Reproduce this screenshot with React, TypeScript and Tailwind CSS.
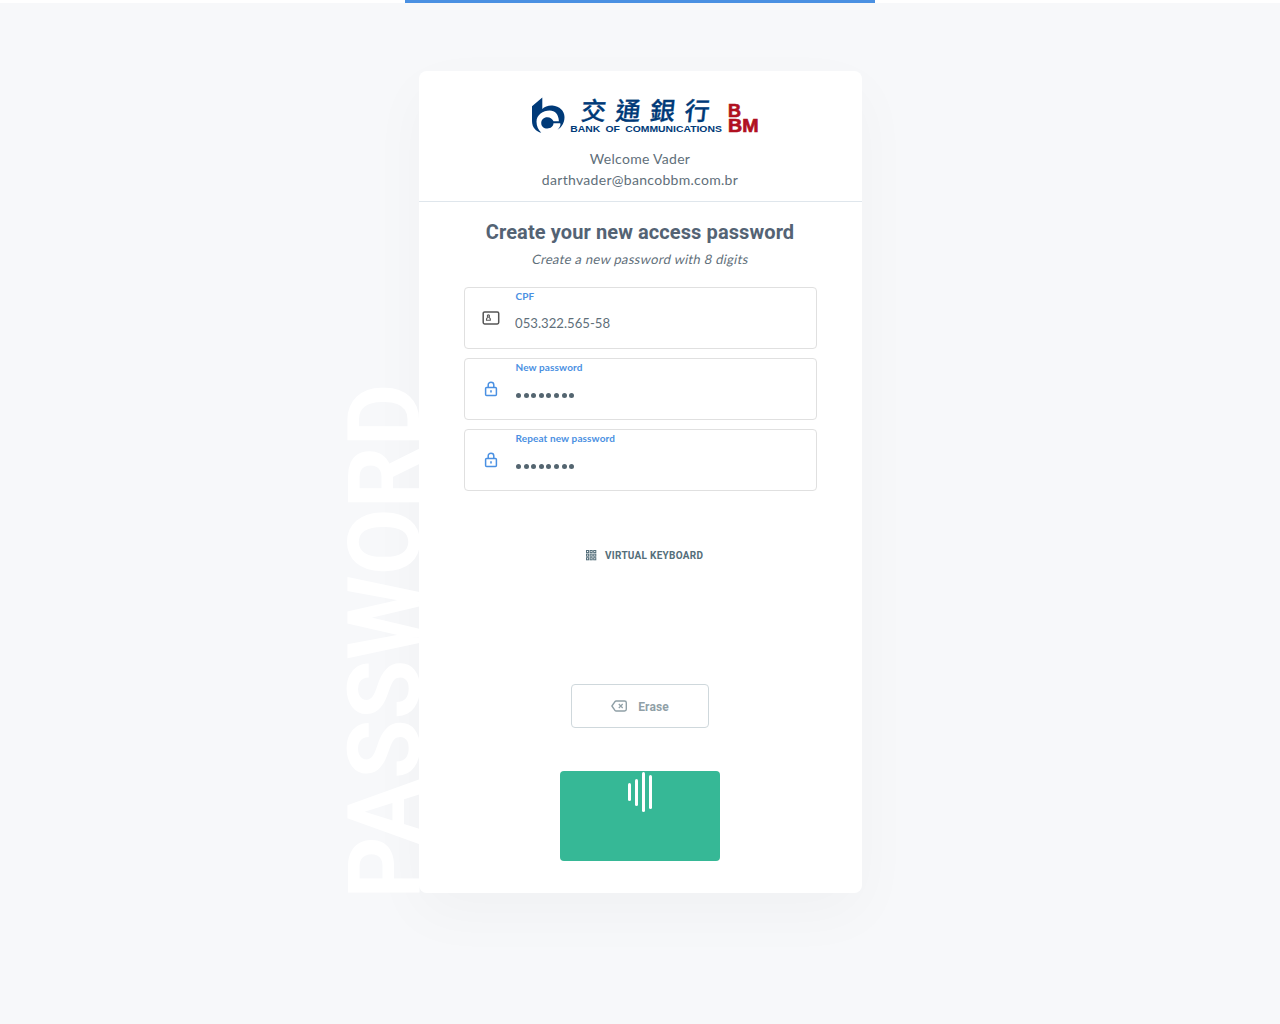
import React from "react";

const lato = "font-['Lato',sans-serif]";
const roboto = "font-['Roboto',sans-serif]";

function Logo() {
  return (
    <svg width="230" height="38" viewBox="530 96 230 38" className="block overflow-visible" role="img" aria-label="Bank of Communications BBM">
      <g fill="#003a78">
        <path d="M542.300 97.500V109C544.500 106.500 548.500 105.200 552.500 105.500C559.500 106 564.500 111 564.500 117C564.500 123 561.500 127.500 557.500 129.800C560 127.500 560.900 125 560.300 123.300H553V121.300H558.900C558.700 114.500 555 110.600 549.700 110.600C543 110.600 536.500 115 536.500 121.800C536.500 126.500 538.500 130 541.300 132.800C536 131.500 532 127.500 532 121V106.200Z" />
        <path d="M553.500 121.300C552.500 119 550.300 117.300 547.300 117.300C543.700 117.300 541.200 119.900 541.200 122.900C541.200 126 543.700 128.500 547.300 128.500C550.700 128.500 553.200 126.500 553.500 123.300Z" />
        <g fontFamily="'Noto Sans CJK TC', sans-serif" fontSize="25" fontWeight="500" stroke="#003a78" strokeWidth="0.300" transform="translate(12.500 0) skewX(-6)">
          <text x="580.500" y="120.500">交</text>
          <text x="615" y="120.500">通</text>
          <text x="649.500" y="120.500">銀</text>
          <text x="684" y="120.500">行</text>
        </g>
        <text x="570.300" y="131.800" fontFamily="'Liberation Sans', sans-serif" fontWeight="700" fontSize="8.500" wordSpacing="2" textLength="151.500" lengthAdjust="spacingAndGlyphs">BANK OF COMMUNICATIONS</text>
      </g>
      <g fill="#b01020" stroke="#b01020" strokeWidth="0.700" fontFamily="'Liberation Sans', sans-serif" fontWeight="700" fontSize="18.500">
        <text x="728" y="117" textLength="13" lengthAdjust="spacingAndGlyphs">B</text>
        <text x="728" y="132" textLength="30.500" lengthAdjust="spacingAndGlyphs">BM</text>
      </g>
    </svg>
  );
}

function CardIcon() {
  return (
    <svg width="18" height="14" viewBox="0 0 18 14" fill="none" stroke="#555" strokeWidth="1.500">
      <rect x="1.200" y="0.900" width="15.500" height="12.100" rx="1.400" />
      <g strokeWidth="1.100">
        <circle cx="6.400" cy="5" r="1.100" />
        <path d="M5.600 6.300L4.500 8V9.200H8.300V8L7.200 6.300" />
      </g>
    </svg>
  );
}

function LockIcon() {
  return (
    <svg width="14" height="16" viewBox="0 0 14 16" fill="none" stroke="#4a90e2" strokeWidth="1.500">
      <rect x="1.600" y="6.400" width="10.800" height="8" rx="1" />
      <path d="M4.200 6.200V3.900C4.200 2.300 5.400 1.200 7 1.200S9.800 2.300 9.800 3.900V6.200" />
      <path d="M7 9.200V11.400" strokeWidth="1.600" />
    </svg>
  );
}

function GridIcon() {
  const cells = [0.5, 4.1, 7.7];
  return (
    <svg width="11" height="11" viewBox="0 0 11 11" fill="none" stroke="#546e7a" strokeWidth="1">
      {cells.map((y) => cells.map((x) => <rect key={`${x}-${y}`} x={x} y={y} width="2.100" height="2.100" />))}
    </svg>
  );
}

function EraseIcon() {
  return (
    <svg width="17" height="12" viewBox="0 0 17 12" fill="none" stroke="#90a0a7" strokeWidth="1.400" strokeLinejoin="round">
      <path d="M5.200 1H13.500C14.700 1 15.300 1.600 15.300 2.700V9.300C15.300 10.400 14.700 11 13.500 11H5.200C4.500 11 4.200 10.700 3.800 10.200L0.900 6L3.800 1.800C4.200 1.300 4.500 1 5.200 1Z" />
      <path d="M7.800 4L11.700 8M11.700 4L7.800 8" strokeWidth="1.200" />
    </svg>
  );
}

function Field({ icon, label, children }: { icon: React.ReactNode; label: string; children: React.ReactNode }) {
  return (
    <div className="flex h-[62px] rounded border border-[#e0e0e0]">
      <div className="flex w-[50px] items-center justify-center pl-[2px]">{icon}</div>
      <div className={`${lato} flex flex-col`}>
        <span className="mt-[2px] pl-[0.5px] text-[10px] leading-[12px] font-bold tracking-[0.12px] text-[#4a90e2]">{label}</span>
        {children}
      </div>
    </div>
  );
}

function Dots() {
  return (
    <div className="mt-[19.5px] flex gap-[2.6px] pl-[1px]" aria-label="8 characters entered">
      {Array.from({ length: 8 }, (_, i) => (
        <span key={i} className="size-[5px] rounded-full bg-[#546570]" />
      ))}
    </div>
  );
}

export default function App() {
  return (
    <div className="h-[1024px] overflow-hidden bg-[#f7f8fa]">
      <div className="flex h-[3px] justify-center bg-white">
        <div className="w-[470px] bg-[#4a90e2]" />
      </div>
      <div className="relative mt-[68px] ml-[419px] h-[822px] w-[443px] rounded-lg shadow-[0_20px_60px_rgba(0,0,0,0.03)]">
        <div
          className={`${roboto} absolute bottom-[-14px] left-[-93px] scale-y-[0.968] rotate-180 text-[100px] leading-[117px] font-bold text-white [writing-mode:vertical-rl]`}
        >
          PASSWORD
        </div>
        <main className="relative flex h-full flex-col rounded-lg bg-white">
          <header className="flex h-[131px] flex-col items-center border-b border-[#dfe6ec] pt-[25px]">
            <div className="pl-[8px]">
              <Logo />
            </div>
            <div className={`${lato} mt-[14px] mr-[1px] text-center text-[14px] leading-[21px] tracking-[0.3px] text-[#5f6f7a]`}>
              <p>Welcome Vader</p>
              <p>darthvader@bancobbm.com.br</p>
            </div>
          </header>
          <h1 className={`${roboto} mt-[18px] mr-[1px] text-center text-[20px] leading-[24px] font-bold tracking-[0.1px] text-[#546374]`}>
            Create your new access password
          </h1>
          <p className={`${lato} mt-[6px] -skew-x-12 text-center text-[13px] leading-[18px] tracking-[0.31px] text-[#5f6f7a]`}>
            Create a new password with 8 digits
          </p>
          <div className="mt-[19px] ml-[45px] flex w-[353px] flex-col gap-[9px]">
            <Field icon={<CardIcon />} label="CPF">
              <span className="mt-[12px] -ml-[0.5px] origin-left scale-x-[0.94] text-[14px] leading-[18px] text-[#5f6f7a]">053.322.565-58</span>
            </Field>
            <Field icon={<LockIcon />} label="New password">
              <Dots />
            </Field>
            <Field icon={<LockIcon />} label="Repeat new password">
              <Dots />
            </Field>
          </div>
          <button className={`${roboto} mt-[58px] ml-[167px] flex h-[13px] items-center gap-[8px] text-[10px] leading-[13px] font-bold tracking-[0.27px] text-[#546e7a]`}>
            <GridIcon />
            VIRTUAL KEYBOARD
          </button>
          <button className={`${roboto} mt-[122px] ml-[152px] flex h-[44px] w-[138px] items-center justify-center gap-[10px] rounded border border-[#cfd8dc] text-[12px] font-bold tracking-[0.1px] text-[#90a0a7]`}>
            <EraseIcon />
            <span className="pt-[1px]">Erase</span>
          </button>
          <button aria-label="Loading" className="mt-[43px] ml-[141px] flex h-[90px] w-[160px] justify-center rounded bg-[#36b896]">
            <span className="mt-[1px] flex h-[40px] items-center gap-[4px]">
              <span className="h-[18px] w-[3px] rounded-full bg-white" />
              <span className="h-[27px] w-[3px] rounded-full bg-white" />
              <span className="h-[40px] w-[3px] rounded-full bg-white" />
              <span className="h-[34px] w-[3px] rounded-full bg-white" />
            </span>
          </button>
        </main>
      </div>
    </div>
  );
}
